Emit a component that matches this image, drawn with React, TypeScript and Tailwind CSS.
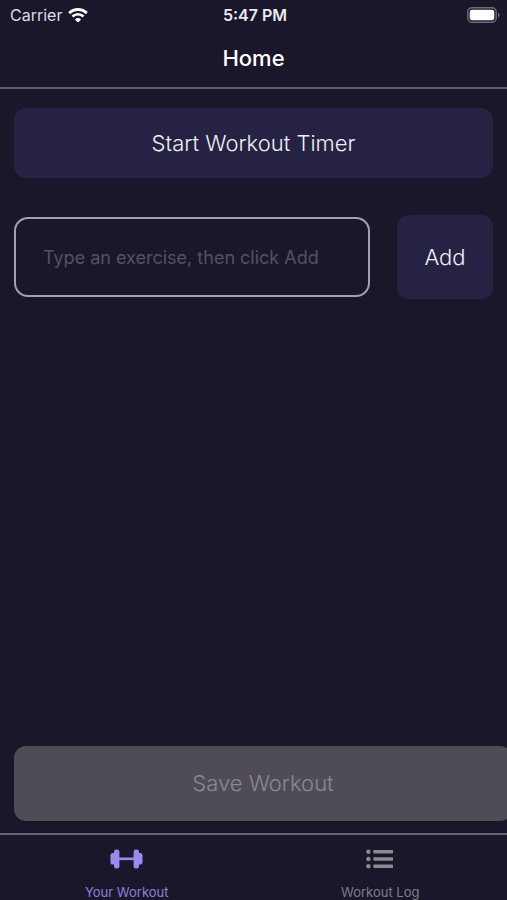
import { useState } from "react";

function WifiIcon() {
  return (
    <svg width="20" height="15" viewBox="0 0 20 15" fill="none" aria-hidden="true">
      <path d="M1.2 5.1a12.6 12.6 0 0 1 17.6 0" stroke="#fff" strokeWidth="2.9" />
      <path d="M4.5 8.5a7.8 7.8 0 0 1 11 0" stroke="#fff" strokeWidth="2.6" />
      <path d="M10 14.6 6.9 11.4a4.5 4.5 0 0 1 6.2 0Z" fill="#fff" />
    </svg>
  );
}

function BatteryIcon() {
  return (
    <svg width="33" height="16" viewBox="0 0 33 16" fill="none" aria-hidden="true">
      <rect x="0.8" y="0.8" width="28.4" height="14.4" rx="4.2" stroke="#6f6c7a" strokeWidth="1.4" />
      <rect x="2.7" y="2.7" width="24.6" height="10.6" rx="2.4" fill="#fff" />
      <path d="M31 5.6c2 .8 2 4 0 4.8Z" fill="#6f6c7a" />
    </svg>
  );
}

function DumbbellIcon() {
  return (
    <svg width="33" height="20" viewBox="0 0 33 20" fill="#988bf0" aria-hidden="true">
      <rect x="8" y="8.5" width="17" height="2.6" />
      <rect x="4" y="0.5" width="5.4" height="19" rx="2.2" />
      <rect x="23.6" y="0.5" width="5.4" height="19" rx="2.2" />
      <rect x="0.5" y="4" width="6" height="11.6" rx="2.2" />
      <rect x="26.5" y="4" width="6" height="11.6" rx="2.2" />
    </svg>
  );
}

function ListIcon() {
  return (
    <svg width="28" height="20" viewBox="0 0 28 20" fill="#8c8992" aria-hidden="true">
      <circle cx="2.4" cy="2.7" r="2.2" />
      <circle cx="2.4" cy="10" r="2.2" />
      <circle cx="2.4" cy="17.3" r="2.2" />
      <rect x="7.4" y="1" width="19.6" height="3.4" rx="0.6" />
      <rect x="7.4" y="8.3" width="19.6" height="3.4" rx="0.6" />
      <rect x="7.4" y="15.6" width="19.6" height="3.4" rx="0.6" />
    </svg>
  );
}

export default function App() {
  const [exercise, setExercise] = useState("");

  return (
    <div className="flex h-screen flex-col overflow-hidden bg-[#1b172b] font-['Inter','Liberation_Sans',sans-serif] text-white">
      <header className="border-b-2 border-[#5f5c6a]">
        <div className="grid h-[30px] grid-cols-3 items-center pr-[7px] pl-[10px] text-base">
          <div className="flex items-center gap-[6px] text-[#dddce2]">
            <span>Carrier</span>
            <WifiIcon />
          </div>
          <time className="text-center font-semibold text-[#ebeaf0]">5:47 PM</time>
          <div className="flex justify-end">
            <BatteryIcon />
          </div>
        </div>
        <h1 className="flex h-[57px] items-center justify-center text-[22px] font-medium">Home</h1>
      </header>

      <main className="flex flex-1 flex-col pt-[19px] pb-3">
        <button type="button" className="mx-[14px] h-[70px] rounded-xl bg-[#262243] text-[22px] font-light text-[#f0eff5]">
          Start Workout Timer
        </button>
        <form className="mx-[14px] mt-[37px] flex items-center gap-[27px]" onSubmit={(e) => e.preventDefault()}>
          <input
            type="text"
            aria-label="Exercise"
            value={exercise}
            onChange={(e) => setExercise(e.target.value)}
            placeholder="Type an exercise, then click Add"
            className="h-20 min-w-0 flex-1 rounded-[14px] border-2 border-[#a3a1aa] bg-transparent px-[27px] text-lg outline-none placeholder:text-[#54515f]"
          />
          <button type="submit" className="h-[84px] w-24 rounded-xl bg-[#262243] text-[22px] font-light text-[#f0eff5]">
            Add
          </button>
        </form>
        <button
          type="button"
          disabled
          className="mt-auto -mr-[5px] ml-[14px] h-[75px] rounded-xl bg-[#4f4c58] text-[22px] font-light text-[#8b8893]"
        >
          Save Workout
        </button>
      </main>

      <nav className="grid h-[67px] grid-cols-2 border-t-2 border-[#676472] text-[13px]">
        <a href="#workout" aria-current="page" className="flex flex-col items-center gap-[13px] pt-[14px] text-[#8d80dc]">
          <DumbbellIcon />
          <span className="leading-5">Your Workout</span>
        </a>
        <a href="#log" className="flex flex-col items-center gap-[13px] pt-[14px] text-[#7f7c87]">
          <ListIcon />
          <span className="leading-5">Workout Log</span>
        </a>
      </nav>
    </div>
  );
}
